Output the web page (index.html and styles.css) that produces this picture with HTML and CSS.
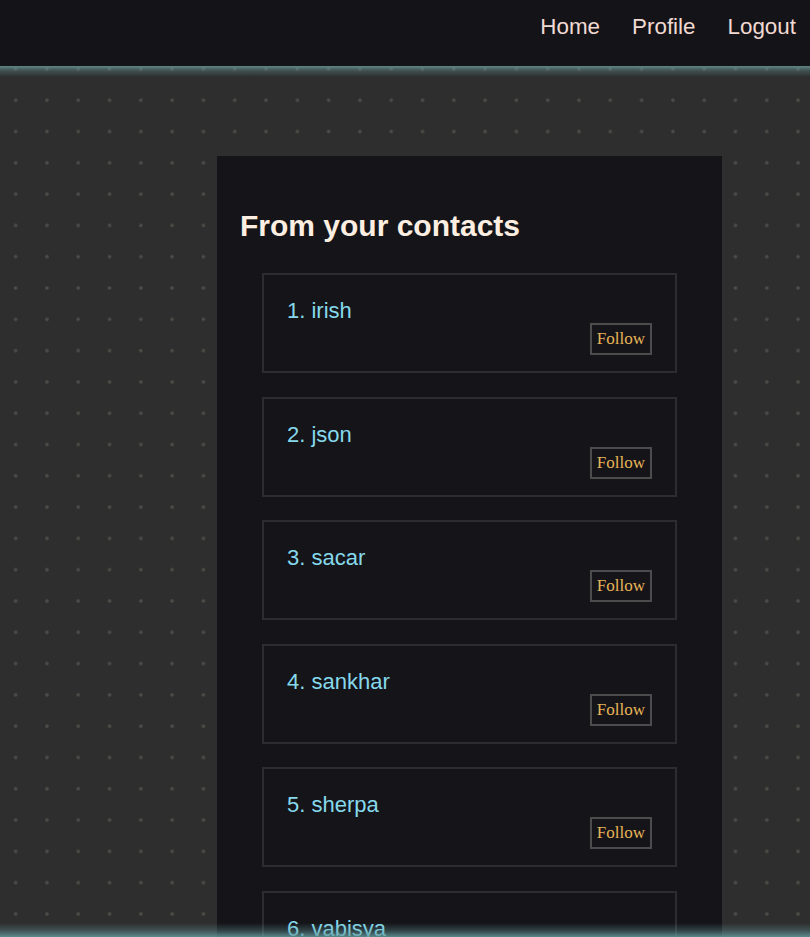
FILE: index.html
```html
<!DOCTYPE html>
<html lang="en">
<head>
<meta charset="utf-8">
<title>From your contacts</title>
<link rel="stylesheet" href="styles.css">
</head>
<body>
<header class="topbar">
  <nav class="nav">
    <a href="#" class="nav-link">Home</a>
    <a href="#" class="nav-link">Profile</a>
    <a href="#" class="nav-link">Logout</a>
  </nav>
</header>
<main class="page">
  <section class="panel">
    <h2 class="panel-title">From your contacts</h2>
    <ul class="contact-list">
      <li class="contact"><span class="contact-name">1. irish</span><button class="follow">Follow</button></li>
      <li class="contact"><span class="contact-name">2. json</span><button class="follow">Follow</button></li>
      <li class="contact"><span class="contact-name">3. sacar</span><button class="follow">Follow</button></li>
      <li class="contact"><span class="contact-name">4. sankhar</span><button class="follow">Follow</button></li>
      <li class="contact"><span class="contact-name">5. sherpa</span><button class="follow">Follow</button></li>
      <li class="contact"><span class="contact-name">6. vabisya</span><button class="follow">Follow</button></li>
    </ul>
  </section>
</main>
<div class="bottom-glow"></div>
</body>
</html>
```

FILE: styles.css
```css
html, body {
  margin: 0;
  padding: 0;
}
body {
  background-color: #2e2e2e;
  background-image: radial-gradient(circle, #4a4d47 0, #4a4d47 1.3px, rgba(74,77,71,0) 2.2px);
  background-size: 31.3px 31.3px;
  background-position: 0 22px;
  font-family: "Liberation Sans", Arial, sans-serif;
  min-height: 100vh;
}
.topbar {
  position: relative;
  height: 66px;
  background: #141418;
  display: flex;
  justify-content: flex-end;
  align-items: center;
}
.topbar::after {
  content: "";
  position: absolute;
  left: 0;
  right: 0;
  top: 66px;
  height: 11px;
  background: linear-gradient(to bottom, rgba(104,150,152,0.85), rgba(104,150,152,0.35) 40%, rgba(104,150,152,0));
}
.nav {
  display: flex;
  gap: 32px;
  padding-right: 14px;
  margin-top: -13px;
}
.nav-link {
  color: #f1dad3;
  text-decoration: none;
  font-size: 22.4px;
}
.page {
  display: flex;
  padding: 90px 88px 0 217px;
}
.panel {
  flex: 1;
  background: #151519;
  padding: 53px 23px 40px;
}
.panel-title {
  margin: 0 0 30px;
  font-size: 30px;
  font-weight: bold;
  color: #fcefe2;
}
.contact-list {
  list-style: none;
  margin: 0 22px;
  padding: 0;
  display: flex;
  flex-direction: column;
  gap: 23.5px;
}
.contact {
  border: 2px solid #2d2d30;
  padding: 23px 23px 16px;
  display: flex;
  flex-direction: column;
  align-items: flex-start;
}
.contact-name {
  color: #86d9ec;
  font-size: 22px;
  line-height: 25px;
}
.follow {
  align-self: flex-end;
  margin-top: 0;
  height: 32px;
  padding: 0 5px;
  background: transparent;
  border: 2px solid #4c4c4c;
  color: #e8b458;
  font-family: "Liberation Serif", "Times New Roman", serif;
  font-size: 17px;
  cursor: pointer;
}
.bottom-glow {
  position: fixed;
  left: 0;
  right: 0;
  bottom: 0;
  height: 14px;
  pointer-events: none;
  background: linear-gradient(to bottom, rgba(100,155,158,0), rgba(100,155,158,0.35) 55%, rgba(100,155,158,0.85));
}
```
